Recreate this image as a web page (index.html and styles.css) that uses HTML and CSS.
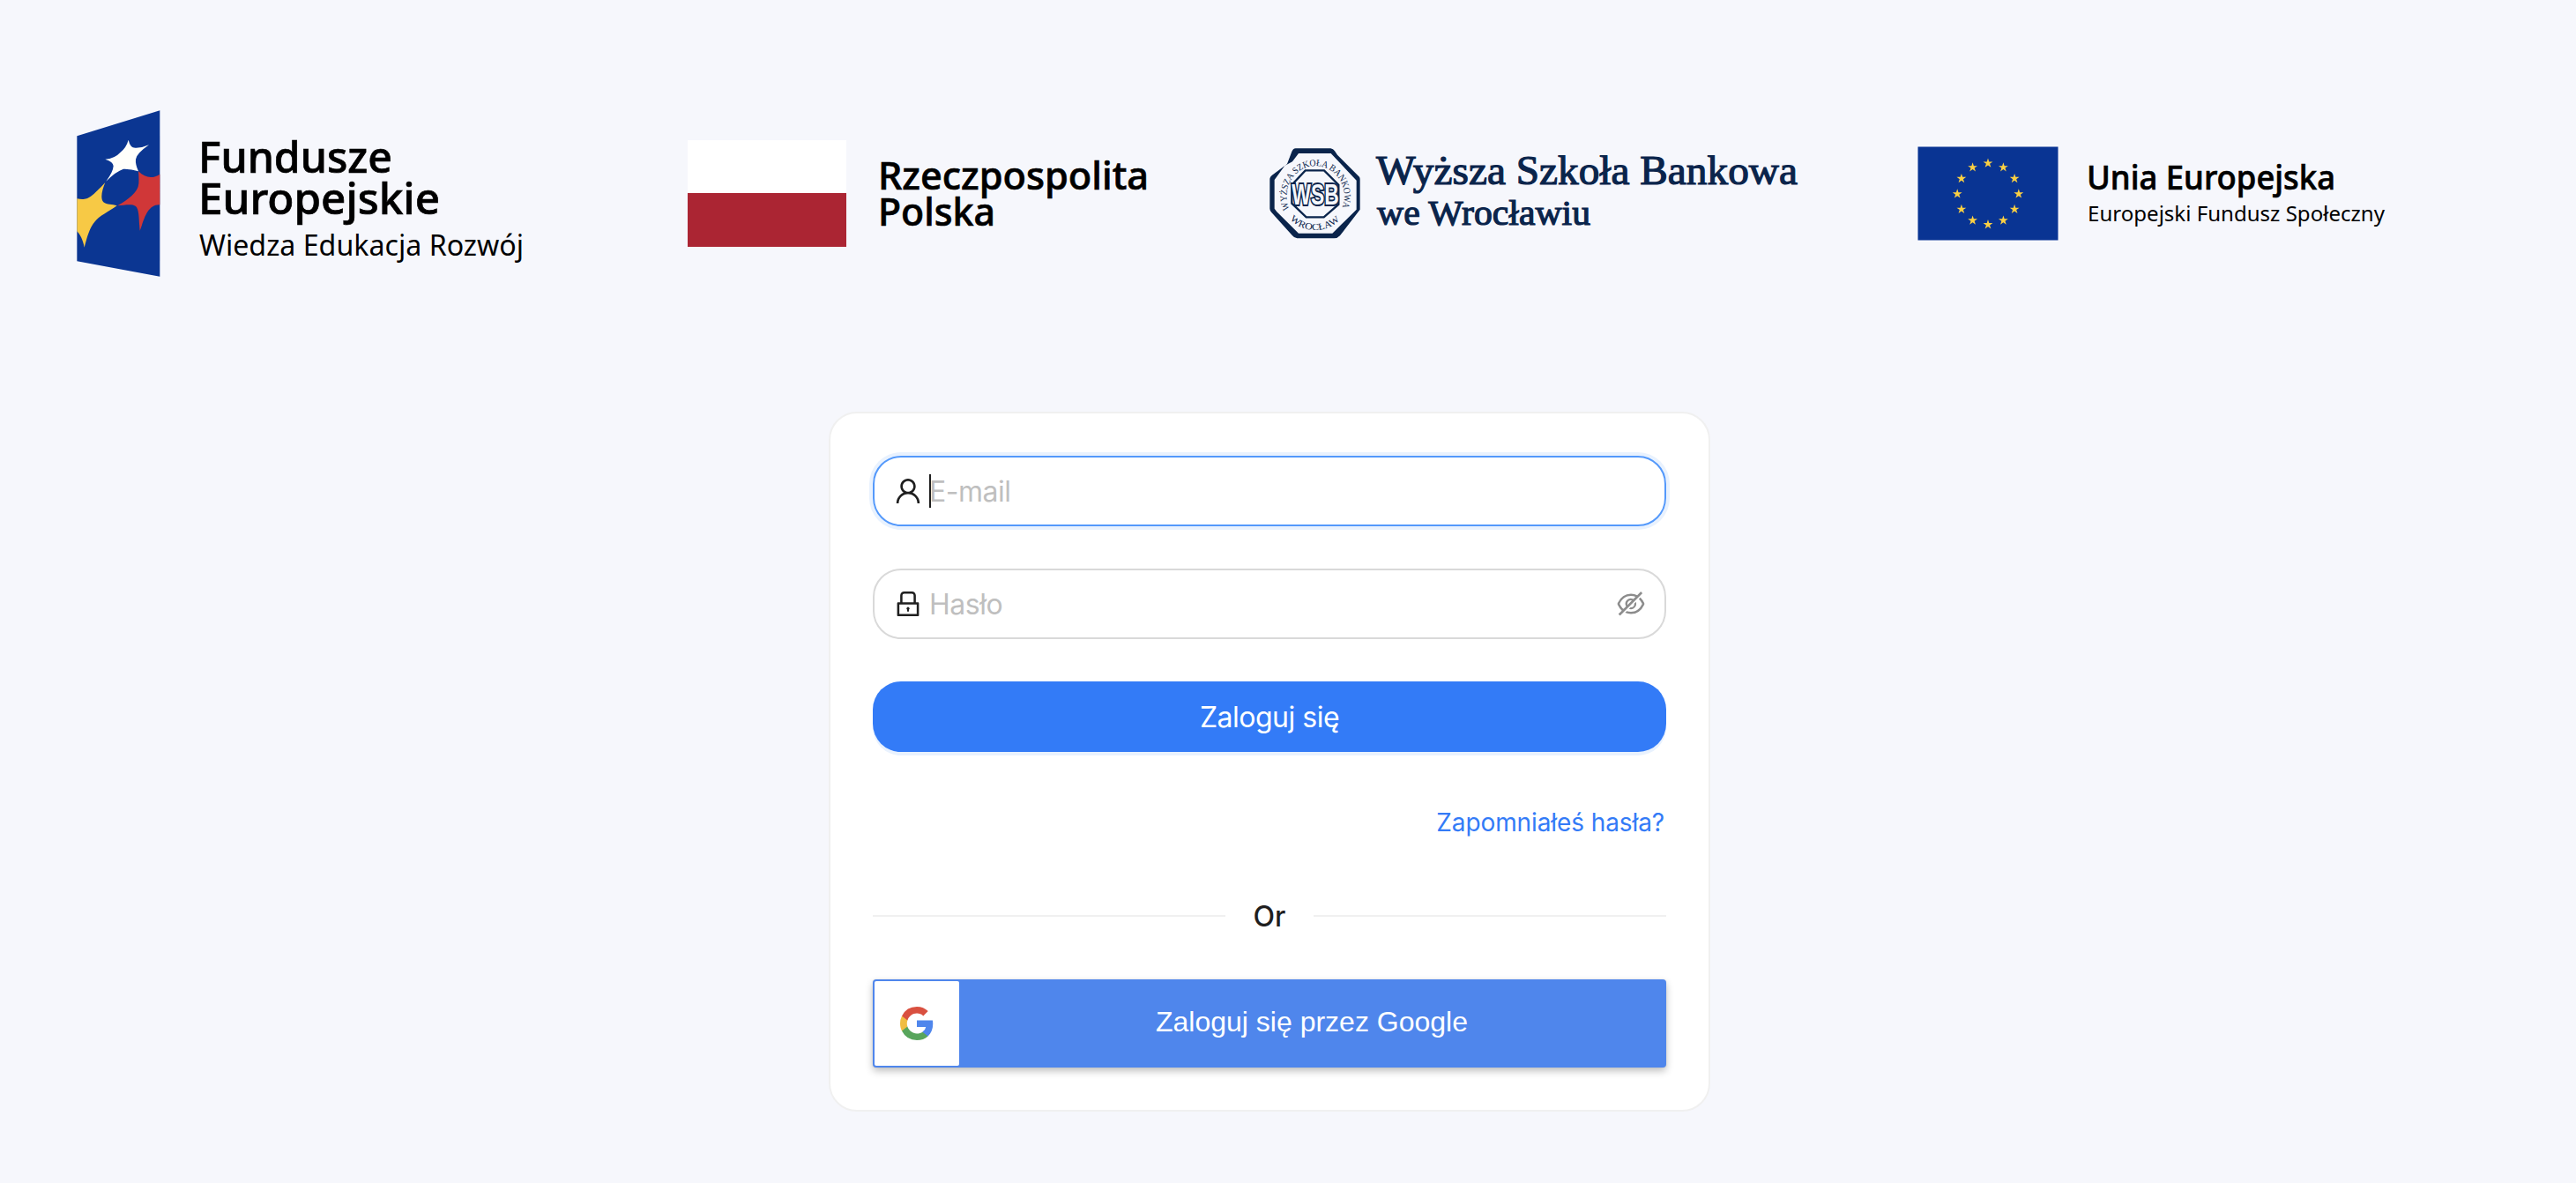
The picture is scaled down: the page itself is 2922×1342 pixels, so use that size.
FILE: index.html
```html
<!DOCTYPE html>
<html lang="pl">
<head>
<meta charset="utf-8">
<title>Logowanie</title>
<link rel="stylesheet" href="styles.css">
</head>
<body>
<header class="partners">
  <svg class="partner-logo" width="515" height="190" viewBox="87 125 515 190">
    <g transform="translate(80 115) scale(.33333)">
      <path fill="#0b3692" d="M22 118 304 31V596L22 544Z"/>
      <path fill="#fffffb" d="M197 131Q203 158 220 158Q243 159 267 148Q224 178 222 197Q220 213 231 238Q205 229 180 230Q155 238 121 272Q145 240 146 220Q145 205 118 197Q150 195 170 173Q190 157 197 131Z"/>
      <path fill="#f7c945" d="M118 276C108 300 100 330 112 343C124 352 142 350 158 355C130 375 98 390 82 410C62 435 55 468 47 497C42 470 32 452 22 442V331C55 337 65 333 118 276Z"/>
      <path fill="#d03738" d="M231 238C255 262 280 264 304 248V352C260 350 250 405 236 440C232 405 235 370 222 357C210 348 185 353 160 355C195 335 230 310 232 280C233 265 232 252 231 238Z"/>
    </g>
    <text class="name" x="225" y="195.500" font-size="49" textLength="220" lengthAdjust="spacingAndGlyphs">Fundusze</text>
    <text class="name" x="225" y="243" font-size="49" textLength="274" lengthAdjust="spacingAndGlyphs">Europejskie</text>
    <text class="sub" x="226" y="290" font-size="33" textLength="368" lengthAdjust="spacingAndGlyphs">Wiedza Edukacja Rozwój</text>
  </svg>
  <svg class="partner-logo" width="525" height="190" viewBox="780 125 525 190">
    <path fill="#fff" d="M780 159h180v60H780z"/>
    <path fill="#ab2533" d="M780 219h180v61H780z"/>
    <text class="name" x="996" y="215.300" font-size="43" textLength="307" lengthAdjust="spacingAndGlyphs">Rzeczpospolita</text>
    <text class="name" x="996" y="256" font-size="43" textLength="133" lengthAdjust="spacingAndGlyphs">Polska</text>
  </svg>
  <svg class="partner-logo" width="605" height="190" viewBox="1440 125 605 190">
    <g transform="translate(1430 160) scale(.33333)" fill="#0a244b">
      <path fill-rule="evenodd" d="M119 25H238Q247 26 252 34L261 47 336 122Q338 125 338 130V233L270 322Q262 331 250 331H124Q114 330 108 322L37 243Q31 236 31 230V128Q32 122 38 117L90 78 106 36Q110 26 119 25ZM129 42 108 70 82 84 47 132V230L55 241 129 314H244L326 233V134L239 42Z"/>
      <path fill="none" stroke="#0a244b" stroke-width="7" d="M152 100H216L265 149V216L215 259H155L106 212V149Z"/>
      <text class="monogram" x="106" y="217" textLength="160" lengthAdjust="spacingAndGlyphs">WSB</text>
      <path id="arc-top" fill="none" d="M98 232A98 103 0 1 1 275 232"/>
      <path id="arc-bottom" fill="none" d="M100 266A118 118 0 0 0 273 265"/>
      <text class="seal"><textPath href="#arc-top" textLength="400" lengthAdjust="spacingAndGlyphs">WYŻSZA SZKOŁA BANKOWA</textPath></text>
      <text class="seal"><textPath href="#arc-bottom" textLength="188" lengthAdjust="spacingAndGlyphs">WROCŁAW</textPath></text>
    </g>
    <text class="bank" x="1561" y="208.700" font-size="47" textLength="478" lengthAdjust="spacingAndGlyphs">Wyższa Szkoła Bankowa</text>
    <text class="bank" x="1562" y="254.700" font-size="41" textLength="242" lengthAdjust="spacingAndGlyphs">we Wrocławiu</text>
  </svg>
  <svg class="partner-logo" width="535" height="190" viewBox="2175 125 535 190">
    <defs><path id="star" fill="#fbd043" d="M0-5.700 1.280-1.760H5.420L2.070.670 3.350 4.610 0 2.180-3.350 4.610-2.070.670-5.420-1.760H-1.280Z"/></defs>
    <path fill="#093493" d="M2175.500 166.500h159v106h-159z"/>
    <g transform="translate(2255 220)">
      <use href="#star" y="-34.800"/><use href="#star" x="17.400" y="-30.100"/><use href="#star" x="30.100" y="-17.400"/><use href="#star" x="34.800"/>
      <use href="#star" x="30.100" y="17.400"/><use href="#star" x="17.400" y="30.100"/><use href="#star" y="34.800"/><use href="#star" x="-17.400" y="30.100"/>
      <use href="#star" x="-30.100" y="17.400"/><use href="#star" x="-34.800"/><use href="#star" x="-30.100" y="-17.400"/><use href="#star" x="-17.400" y="-30.100"/>
    </g>
    <text class="name" x="2367" y="215" font-size="37.500" textLength="282" lengthAdjust="spacingAndGlyphs">Unia Europejska</text>
    <text class="sub" x="2368" y="250.700" font-size="24" textLength="337" lengthAdjust="spacingAndGlyphs">Europejski Fundusz Społeczny</text>
  </svg>
</header>
<main class="login-card">
  <div class="field field-focused">
    <svg class="icon" viewBox="0 0 1024 1024"><path d="M858.500 763.600a374 374 0 0 0-80.600-119.500 375.630 375.630 0 0 0-119.500-80.600c-.4-.2-.8-.3-1.200-.5C719.500 518 760 444.700 760 362c0-137-111-248-248-248S264 225 264 362c0 82.700 40.500 156 102.800 201.100-.4.200-.8.300-1.200.5-44.800 18.900-85 46-119.500 80.600a375.630 375.630 0 0 0-80.600 119.500A371.700 371.700 0 0 0 136 901.800a8 8 0 0 0 8 8.200h60c4.400 0 7.900-3.500 8-7.800 2-77.200 33-149.500 87.800-204.300 56.700-56.700 132-87.900 212.200-87.900s155.500 31.200 212.200 87.900C779 752.700 810 825 812 902.200c.1 4.400 3.600 7.800 8 7.800h60a8 8 0 0 0 8-8.200c-1-47.800-10.900-94.300-29.500-138.200zM512 534c-45.900 0-89.100-17.900-121.600-50.400S340 407.900 340 362c0-45.900 17.900-89.100 50.400-121.600S466.100 190 512 190s89.100 17.900 121.600 50.400S684 316.100 684 362c0 45.900-17.900 89.100-50.400 121.600S557.900 534 512 534z"/></svg>
    <span class="caret"></span>
    <span class="placeholder">E-mail</span>
  </div>
  <div class="field">
    <svg class="icon" viewBox="0 0 1024 1024"><path d="M832 464h-68V240c0-70.700-57.300-128-128-128H388c-70.700 0-128 57.300-128 128v224h-68c-17.700 0-32 14.300-32 32v384c0 17.700 14.300 32 32 32h640c17.700 0 32-14.300 32-32V496c0-17.700-14.300-32-32-32zM332 240c0-30.900 25.100-56 56-56h248c30.900 0 56 25.100 56 56v224H332V240zm460 600H232V536h560v304zM484 701v53c0 4.400 3.600 8 8 8h40c4.400 0 8-3.600 8-8v-53a48.010 48.010 0 1 0-56 0z"/></svg>
    <span class="placeholder">Hasło</span>
    <svg class="icon icon-eye" viewBox="0 0 1024 1024"><path d="M942.200 486.200Q889.470 375.110 816.700 305l-50.880 50.880C807.310 395.530 843.450 447.400 874.700 512 791.500 684.200 673.400 766 512 766q-72.670 0-133.870-22.380L323 798.750Q408 838 512 838q288.300 0 430.200-300.300a60.290 60.290 0 0 0 0-51.500zm-63.570-320.640L836 122.880a8 8 0 0 0-11.320 0L715.310 232.200Q624.860 186 512 186q-288.300 0-430.200 300.300a60.300 60.300 0 0 0 0 51.500q56.690 119.400 136.500 191.410L112.480 835a8 8 0 0 0 0 11.310L155.170 889a8 8 0 0 0 11.310 0l712.150-712.120a8 8 0 0 0 0-11.320zM149.300 512C232.600 339.800 350.700 258 512 258c54.540 0 104.130 9.360 149.120 28.390l-70.300 70.300a176 176 0 0 0-238.130 238.130l-83.420 83.420C223.100 637.490 183.300 582.280 149.300 512zm246.700 0a112.110 112.110 0 0 1 146.200-106.690L401.310 546.200A112 112 0 0 1 396 512z"/><path d="M508 624c-3.460 0-6.870-.16-10.250-.47l-52.820 52.820a176.090 176.090 0 0 0 227.420-227.420l-52.820 52.820c.31 3.380.47 6.790.47 10.250a111.940 111.940 0 0 1-112 112z"/></svg>
  </div>
  <button class="submit" type="button">Zaloguj się</button>
  <a class="forgot">Zapomniałeś hasła?</a>
  <div class="divider">Or</div>
  <button class="google" type="button">
    <span class="google-badge">
      <svg width="38" height="38" viewBox="0 0 18 18"><path fill="#4f86ec" d="M17.640 9.200c0-.637-.057-1.251-.164-1.840H9v3.481h4.844a4.140 4.140 0 0 1-1.796 2.716v2.259h2.908c1.702-1.567 2.684-3.875 2.684-6.615z"/><path fill="#58a55c" d="M9 18c2.430 0 4.467-.806 5.956-2.180l-2.908-2.259c-.806.540-1.837.860-3.048.860-2.344 0-4.328-1.584-5.036-3.711H.957v2.332A8.997 8.997 0 0 0 9 18z"/><path fill="#f1bd42" d="M3.964 10.710A5.410 5.410 0 0 1 3.682 9c0-.593.102-1.170.282-1.710V4.958H.957A8.996 8.996 0 0 0 0 9c0 1.452.348 2.827.957 4.042l3.007-2.332z"/><path fill="#d95040" d="M9 3.580c1.321 0 2.508.454 3.440 1.345l2.582-2.580C13.463.891 11.426 0 9 0A8.997 8.997 0 0 0 .957 4.958L3.964 7.290C4.672 5.163 6.656 3.580 9 3.580z"/></svg>
    </span>
    <span class="google-label">Zaloguj się przez Google</span>
  </button>
</main>
</body>
</html>
```
FILE: styles.css
```css
* { box-sizing: border-box; }

body {
  margin: 0;
  min-height: 1342px;
  background: #f6f7fc;
  color: #1f1f1f;
  font-family: Inter, "Liberation Sans", sans-serif;
  font-size: 32px;
}

.partners {
  display: grid;
  grid-template-columns: 693px 660px 735px 1fr;
  width: 2880px;
  padding: 125px 0 0 87px;
}

.partner-logo {
  display: block;
  overflow: visible;
}

.name {
  fill: #000;
  font-family: "Noto Sans", "Open Sans", sans-serif;
  font-weight: 500;
  stroke: #000;
  stroke-width: .7px;
}

.sub {
  fill: #000;
  font-family: "Noto Sans", "Open Sans", sans-serif;
}

.bank {
  fill: #0a244b;
  stroke: #0a244b;
  stroke-width: 1.2px;
  font-family: "Liberation Serif", serif;
}

.seal {
  font-family: "Liberation Serif", serif;
  font-size: 32px;
}

.monogram {
  fill: #f6f7fc;
  stroke: #0a244b;
  stroke-width: 12px;
  paint-order: stroke;
  font-family: "Liberation Sans", sans-serif;
  font-weight: 700;
  font-size: 100px;
}

.login-card {
  display: flex;
  flex-direction: column;
  width: 1000px;
  height: 794px;
  margin: 152px 0 0 940px;
  padding: 48px;
  border: 2px solid #f0f0f0;
  border-radius: 32px;
  background: #fff;
}

.field {
  position: relative;
  display: flex;
  align-items: center;
  height: 80px;
  margin-bottom: 48px;
  padding: 0 20px;
  border: 2px solid #d9d9d9;
  border-radius: 32px;
}

.field-focused {
  border-color: #5499fb;
  box-shadow: 0 0 0 4px #e9f2fe;
}

.icon {
  width: 36px;
  height: 36px;
  fill: #1f1f1f;
}

.icon-eye {
  margin-left: auto;
  fill: #8c8c8c;
}

.placeholder {
  margin-left: 6px;
  color: #bfbfbf;
  letter-spacing: -.5px;
}

.caret {
  position: absolute;
  left: 62px;
  top: 19px;
  width: 2px;
  height: 38px;
  background: #1f1f1f;
}

.submit {
  height: 80px;
  padding: 0;
  border: 0;
  border-radius: 32px;
  background: #337bf7;
  box-shadow: 0 4px 0 #e9f2fe;
  color: #fff;
  font: inherit;
  letter-spacing: -.5px;
}

.forgot {
  align-self: flex-end;
  margin-top: 62px;
  padding-right: 2px;
  color: #337bf7;
  font-size: 28px;
  letter-spacing: -.1px;
  line-height: 36px;
}

.divider {
  display: flex;
  align-items: center;
  justify-content: space-between;
  height: 50px;
  margin-top: 63px;
  font-weight: 500;
}

.divider::before,
.divider::after {
  content: "";
  width: 400px;
  height: 2px;
  background: #f0f0f0;
}

.google {
  display: flex;
  height: 100px;
  margin-top: 47px;
  padding: 2px;
  border: 0;
  border-radius: 4px;
  background: #4f86ec;
  box-shadow: 0 4px 8px rgba(0, 0, 0, .25), 0 0 2px rgba(0, 0, 0, .1);
  color: #fff;
  font: 32px "Liberation Sans", Arial, sans-serif;
}

.google-badge {
  display: flex;
  align-items: center;
  justify-content: center;
  width: 96px;
  height: 96px;
  border-radius: 2px;
  background: #fff;
}

.google-label {
  flex: 1;
  line-height: 92px;
}
```
